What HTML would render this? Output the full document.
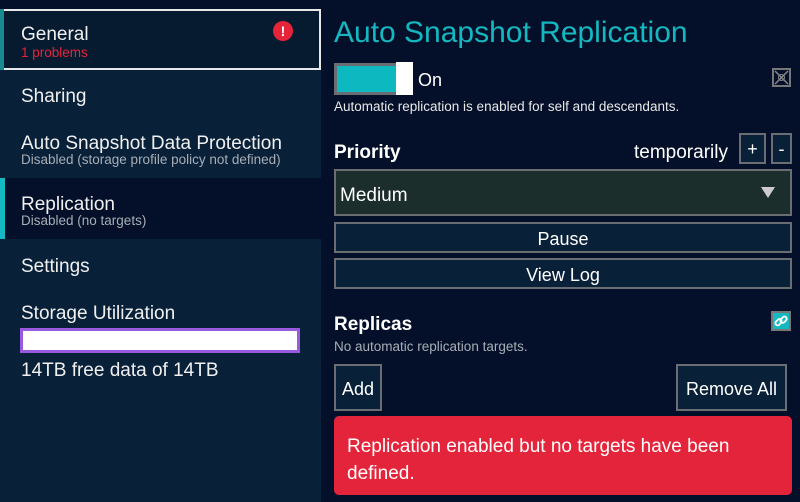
<!DOCTYPE html>
<html><head><style>
*{margin:0;padding:0;box-sizing:border-box}
body{width:800px;height:502px;background:#041029;font-family:"Liberation Sans",sans-serif;color:#fff;position:relative;overflow:hidden}
.a{position:absolute;white-space:nowrap}
#side{position:absolute;left:0;top:0;width:321px;height:502px;background:#082038}
.t{font-size:19px;color:#f0f0f0}
.s{font-size:13.5px;color:#a8aeb6}
.btn{position:absolute;border:2px solid #6a6e72;background:#082038;color:#fff;font-size:18px;text-align:center}
</style></head><body>
<div id="side">
 <div class="a" style="left:0;top:0;width:321px;height:9px;background:#041029"></div>
 <div class="a" style="left:0;top:9px;width:321px;height:61px;background:#061a30;border:2px solid #e8e8e8"></div>
 <div class="a" style="left:0;top:9px;width:4px;height:61px;background:#1a8a92"></div>
 <div class="a t" style="left:21px;top:24px">General</div>
 <div class="a" style="left:21px;top:45px;font-size:13.5px;color:#e8243a">1 problems</div>
 <div class="a" style="left:273px;top:21px;width:20px;height:20px;border-radius:50%;background:#e52339;color:#fff;font-weight:bold;font-size:14px;text-align:center;line-height:20px">!</div>
 <div class="a t" style="left:21px;top:86px">Sharing</div>
 <div class="a t" style="left:21px;top:133px">Auto Snapshot Data Protection</div>
 <div class="a s" style="left:21px;top:152px">Disabled (storage profile policy not defined)</div>
 <div class="a" style="left:0;top:178px;width:321px;height:61px;background:#041029"></div>
 <div class="a" style="left:0;top:178px;width:5px;height:61px;background:#14b8c0"></div>
 <div class="a t" style="left:21px;top:194px">Replication</div>
 <div class="a s" style="left:21px;top:213px">Disabled (no targets)</div>
 <div class="a t" style="left:21px;top:256px">Settings</div>
 <div class="a t" style="left:21px;top:303px">Storage Utilization</div>
 <div class="a" style="left:20px;top:328px;width:280px;height:25px;background:#fff;border:3px solid #9a5ae0"></div>
 <div class="a t" style="left:21px;top:360px">14TB free data of 14TB</div>
</div>
<div class="a" style="left:334px;top:16px;font-size:30px;color:#14b8c0">Auto Snapshot Replication</div>
<div class="a" style="left:334px;top:63px;width:78px;height:32px;border:3px solid #6a6e72;background:#0db8c0"></div>
<div class="a" style="left:396px;top:62px;width:17px;height:33px;background:#fff"></div>
<div class="a" style="left:418px;top:70px;font-size:18px">On</div>
<div class="a" style="left:772px;top:68px;width:19px;height:19px;border:2px solid #777"><svg width="15" height="15" viewBox="0 0 15 15" style="display:block"><path d="M1 1L14 14M14 1L1 14" stroke="#888" stroke-width="1.5"/><circle cx="7.5" cy="7.5" r="3" fill="none" stroke="#888"/></svg></div>
<div class="a" style="left:334px;top:99px;font-size:13.5px;color:#e8e8e8">Automatic replication is enabled for self and descendants.</div>
<div class="a" style="left:334px;top:142px;font-size:19px;font-weight:bold">Priority</div>
<div class="a" style="left:634px;top:142px;font-size:19px">temporarily</div>
<div class="btn" style="left:739px;top:133px;width:27px;height:31px;line-height:29px">+</div>
<div class="btn" style="left:771px;top:133px;width:21px;height:31px;line-height:29px">-</div>
<div class="a" style="left:334px;top:169px;width:458px;height:47px;border:2px solid #6a6e72;background:#1c2e2c"></div>
<div class="a" style="left:340px;top:185px;font-size:19px">Medium</div>
<div class="a" style="left:761px;top:187px;width:0;height:0;border-left:7px solid transparent;border-right:7px solid transparent;border-top:11px solid #ccc"></div>
<div class="btn" style="left:334px;top:222px;width:458px;height:31px;line-height:31px">Pause</div>
<div class="btn" style="left:334px;top:258px;width:458px;height:31px;line-height:31px">View Log</div>
<div class="a" style="left:334px;top:314px;font-size:19px;font-weight:bold">Replicas</div>
<div class="a" style="left:771px;top:311px;width:20px;height:20px;background:#14b8c0;border:2px solid #777"><svg width="16" height="16" viewBox="0 0 16 16" style="display:block"><g fill="none" stroke="#fff" stroke-width="1.8"><rect x="2" y="7" width="7" height="4.5" rx="2.2" transform="rotate(-45 5.5 9.2)"/><rect x="7" y="4.5" width="7" height="4.5" rx="2.2" transform="rotate(-45 10.5 6.7)"/></g></svg></div>
<div class="a" style="left:334px;top:339px;font-size:13.5px;color:#a8aeb6">No automatic replication targets.</div>
<div class="btn" style="left:334px;top:364px;width:48px;height:47px;line-height:46px">Add</div>
<div class="btn" style="left:676px;top:364px;width:111px;height:47px;line-height:46px">Remove All</div>
<div class="a" style="left:334px;top:416px;width:458px;height:79px;background:#e4243a;border-radius:5px"></div>
<div class="a" style="left:347px;top:433px;font-size:19px;line-height:27px;white-space:normal;width:430px">Replication enabled but no targets have been defined.</div>
</body></html>
